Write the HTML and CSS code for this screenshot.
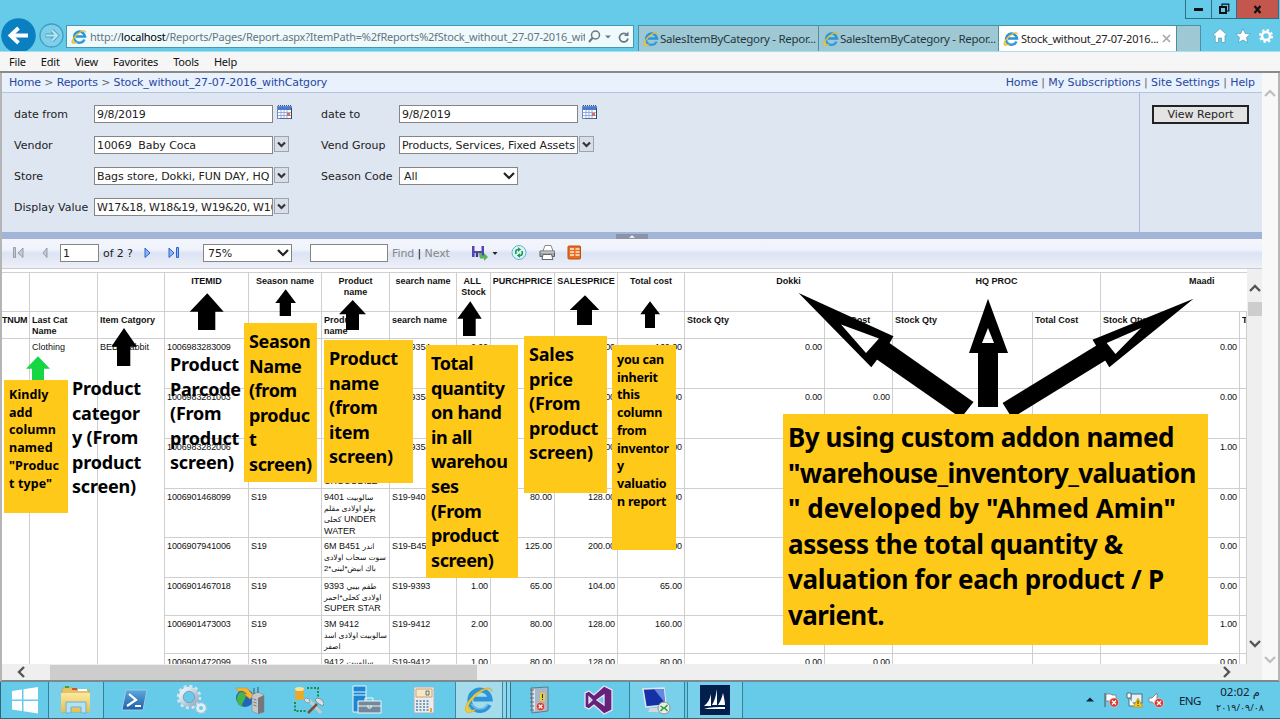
FILE: index.html
```html
<!DOCTYPE html>
<html lang="en">
<head>
<meta charset="utf-8">
<title>Stock_without_27-07-2016_withCatgory</title>
<link rel="stylesheet" href="styles.css">
</head>
<body>
<svg class="defs" width="0" height="0">
  <defs>
    <linearGradient id="gold" x1="0" y1="0" x2="0" y2="1"><stop offset="0" stop-color="#fbe9a0"/><stop offset="1" stop-color="#e5bf4f"/></linearGradient>
    <linearGradient id="steel" x1="0" y1="0" x2="1" y2="1"><stop offset="0" stop-color="#f4f9fc"/><stop offset="1" stop-color="#92abc3"/></linearGradient>
    <linearGradient id="ps" x1="0" y1="0" x2="0" y2="1"><stop offset="0" stop-color="#5fa8dd"/><stop offset="1" stop-color="#1d5fa5"/></linearGradient>
    <symbol id="ie" viewBox="0 0 32 32">
      <path d="M27 21a11 11 0 1 1 1-6H10" fill="none" stroke="#2d94d8" stroke-width="5"/>
      <path d="M26 20a10 10 0 0 1-18 0" fill="none" stroke="#72c4ef" stroke-width="1.5"/>
      <path d="M30 7c0-5-6-5-13-1C8 11-1 23 2 28c2 3 7 1 11-2-4 1-7 1-8-1C3 21 11 12 19 7c5-3 9-4 11 0z" fill="#f2cb31" stroke="#d6a51d" stroke-width=".6"/>
    </symbol>
    <symbol id="cal" viewBox="0 0 15 14">
      <rect x=".5" y="1.500" width="14" height="12" fill="#fff" stroke="#7088c0"/>
      <path d="M1 2h13v3H1z" fill="#4a7bd0"/><path d="M1 .5h13" stroke="#30508f" stroke-dasharray="1 1"/>
      <path d="M4 5v8M7 5v8M10 5v8M1 7.500h13M1 10.500h13" stroke="#7d9cd6" stroke-width=".8"/>
      <path d="M10 8h3v3h-3z" fill="#e06c48"/><path d="M14.500 3v11H3" fill="none" stroke="#34456e"/>
    </symbol>
    <symbol id="bad" viewBox="0 0 10 10"><circle cx="5" cy="5" r="4.600" fill="#d43a31" stroke="#f5c8c4" stroke-width=".7"/><path d="M3 3l4 4M7 3L3 7" stroke="#fff" stroke-width="1.400"/></symbol>
  </defs>
</svg>
<div class="screen">
  <header class="titlebar">
    <div class="nav">
      <svg width="66" height="51" viewBox="0 0 66 51"><circle cx="18.500" cy="35.500" r="17.300" fill="#0b80c0"/><path d="M28 35.500H11M18.500 28l-8 7.500 8 7.500" fill="none" stroke="#fff" stroke-width="3.800"/><circle cx="51.500" cy="35.500" r="11.500" fill="#7fcfea" stroke="#3d9cc0" stroke-width="1.300"/><path d="M45.500 35.500h11M52 30.500l5 5-5 5" fill="none" stroke="#4da3c2" stroke-width="4"/><path d="M46 35.500h10.500M52 30.500l5 5-5 5" fill="none" stroke="#b5e4f3" stroke-width="2.200"/></svg>
      <div class="address"><svg width="16" height="16"><use href="#ie"/></svg><span class="url">http://<b>localhost</b>/Reports/Pages/Report.aspx?ItemPath=%2fReports%2fStock_without_27-07-2016_wit</span>
        <svg width="44" height="16" viewBox="0 0 44 16"><circle cx="8.500" cy="6" r="4" fill="none" stroke="#677a82" stroke-width="1.500"/><path d="M5.500 9L2 13" stroke="#677a82" stroke-width="2"/><path d="M18 6.500h6l-3 3z" fill="#677a82"/><path d="M40.200 6A4.300 4.300 0 1 0 41 9.500" fill="none" stroke="#677a82" stroke-width="1.700"/><path d="M41.500 2.500V7H37z" fill="#677a82"/></svg>
      </div>
    </div>
    <div class="tabs">
      <div class="tab"><svg width="16" height="16"><use href="#ie"/></svg><span>SalesItemByCategory - Repor...</span></div>
      <div class="tab"><svg width="16" height="16"><use href="#ie"/></svg><span>SalesItemByCategory - Repor...</span></div>
      <div class="tab active"><svg width="16" height="16"><use href="#ie"/></svg><span>Stock_without_27-07-2016...</span><svg width="9" height="9" viewBox="0 0 9 9"><path d="M1 1l7 7M8 1L1 8" stroke="#aaa" stroke-width="1.700"/></svg></div>
      <div class="tab new"></div>
    </div>
    <div class="corner">
      <div class="winbtns"><span class="min"><i></i></span><span class="max"><svg width="12" height="12" viewBox="0 0 12 12"><path d="M4 3V1.200h6.800V8H9" fill="none" stroke="#111" stroke-width="1.200"/><rect x="2" y="4" width="6" height="6" fill="none" stroke="#111" stroke-width="2"/></svg></span><span class="close"><svg width="9" height="9" viewBox="0 0 9 9"><path d="M1.500 1l6 7M7.500 1l-6 7" stroke="#111" stroke-width="2.200"/></svg></span></div>
      <svg class="tools" width="64" height="18" viewBox="0 0 64 18"><g fill="#fff" stroke="#5b9eb8" stroke-width=".8"><path d="M8 1.500l7 6.500-1 1.200-1-.8V15.500H9.500v-4.500h-3v4.500H3.200V8.400l-1 .8L1 8z"/><path d="M31 1.500l2.200 5 5.300.5-4 3.500 1.200 5.300L31 13l-4.700 2.800 1.200-5.300-4-3.500 5.300-.5z"/></g><circle cx="54" cy="9" r="4" fill="none" stroke="#fff" stroke-width="2.600"/><circle cx="54" cy="9" r="5.800" fill="none" stroke="#fff" stroke-width="2.400" stroke-dasharray="2.300 2.250"/></svg>
    </div>
  </header>
  <nav class="menubar"><span>File</span><span>Edit</span><span>View</span><span>Favorites</span><span>Tools</span><span>Help</span></nav>
  <main class="window">
    <section class="report">
      <div class="crumbs"><div class="trail"><a>Home</a> &gt; <a>Reports</a> &gt; <a>Stock_without_27-07-2016_withCatgory</a></div><div class="links"><a>Home</a> | <a>My Subscriptions</a> | <a>Site Settings</a> | <a>Help</a></div></div>
      <div class="params">
        <div class="fields">
          <label>date from</label><div class="field"><span class="box">9/8/2019</span><svg class="cal" width="15" height="14"><use href="#cal"/></svg></div>
          <label>date to</label><div class="field"><span class="box">9/8/2019</span><svg class="cal" width="15" height="14"><use href="#cal"/></svg></div>
          <label>Vendor</label><div class="field"><span class="box">10069&nbsp; Baby Coca</span><span class="drop"><svg width="9" height="7" viewBox="0 0 9 7"><path d="M1 1.500l3.500 3.500L8 1.500" /></svg></span></div>
          <label>Vend Group</label><div class="field"><span class="box">Products, Services, Fixed Assets</span><span class="drop"><svg width="9" height="7" viewBox="0 0 9 7"><path d="M1 1.500l3.500 3.500L8 1.500" /></svg></span></div>
          <label>Store</label><div class="field"><span class="box">Bags store, Dokki, FUN DAY, HQ</span><span class="drop"><svg width="9" height="7" viewBox="0 0 9 7"><path d="M1 1.500l3.500 3.500L8 1.500" /></svg></span></div>
          <label>Season Code</label><div class="field"><span class="box select">All<svg width="12" height="8" viewBox="0 0 12 8"><path d="M1 1l5 5 5-5"/></svg></span></div>
          <label>Display Value</label><div class="field"><span class="box seasons">W17&amp;18, W18&amp;19, W19&amp;20, W16</span><span class="drop"><svg width="9" height="7" viewBox="0 0 9 7"><path d="M1 1.500l3.500 3.500L8 1.500" /></svg></span></div>
        </div>
        <div class="run"><div class="button">View Report</div></div>
      </div>
      <div class="splitter"><span><svg width="6" height="4"><path d="M0 4l3-3 3 3z" fill="#e3e9f5"/></svg></span></div>
      <div class="toolbar">
        <svg class="pg" width="36" height="12" viewBox="0 0 36 12"><g fill="#c7c9d0" stroke="#8b8e99" stroke-width=".8"><path d="M.5.500h2v10h-2zM10 1v9.500L5 6zM34 1v9.500L30 6z"/></g></svg>
        <span class="box page">1</span><span class="of">of 2 ?</span>
        <svg class="pg2" width="36" height="12" viewBox="0 0 36 12"><g fill="#8db4f4" stroke="#2c62cf" stroke-width="1"><path d="M1 1v9.500L6 6zM25 1v9.500L30 6zM32.500.500h2v10h-2z"/></g></svg>
        <span class="box zoomsel">75%<svg width="12" height="8" viewBox="0 0 12 8"><path d="M1 1l5 5 5-5"/></svg></span>
        <span class="box find"></span>
        <span class="findnext">Find <b>|</b> Next</span>
        <svg class="icons" width="112" height="18" viewBox="0 0 112 18">
          <path d="M1 2h12v11H1z" fill="#5146ad"/><path d="M3.500 2h7v5h-7z" fill="#f1f1fb"/><path d="M3.500 9h6v4h-6z" fill="#bfc3e5"/><path d="M5 9h2v4H5z" fill="#403585"/><path d="M8 9h3v2.500h2V9l4 4-4 4v-2.500H9z" fill="#56b558"/><path d="M21.500 8h5L24 11z" fill="#222"/>
          <circle cx="48" cy="8.500" r="7" fill="#d9f4f5" stroke="#5fb4d3" stroke-width="1"/><path d="M44.800 10V7.500c0-1.500 1-2 2.700-2M51.200 7v2.500c0 1.500-1 2-2.700 2" fill="none" stroke="#20974f" stroke-width="1.600"/><path d="M47 3.200l3.200 2.300L47 7.800zM49 9.200l-3.200 2.300 3.200 2.300z" fill="#20974f"/>
          <path d="M72 7L74 1.500h6L82 7" fill="#fff" stroke="#888" /><path d="M69 7h14.500v5.500H69z" fill="#a2a4a9" stroke="#5d6068"/><path d="M69.500 8h14" stroke="#ddd"/><path d="M72 10.500h8.500l1.500 5H71z" fill="#fff" stroke="#666"/>
          <rect x="97" y="2" width="12.500" height="13" rx="1" fill="#e56c24" stroke="#bb4e14"/><path d="M99 5h4M99 8h4M99 11h4M104.500 5h4M104.500 8h4M104.500 11h4" stroke="#fff1d0" stroke-width="1.700"/>
        </svg>
      </div>
      <div class="viewer">
        <div class="sheet">
          <div class="groups head">
            <i></i><i></i><i></i><i>ITEMID</i><i>Season name</i><i>Product<br>name</i><i>search name</i><i>ALL&nbsp;<br>Stock</i><i>PURCHPRICE</i><i>SALESPRICE</i><i>Total cost</i><i class="two">Dokki</i><i class="two">HQ PROC</i><i class="two last">Maadi</i>
          </div>
          <div class="groups sub">
            <i class="tnum">TNUM</i><i>Last Cat Name</i><i>Item Catgory</i><i></i><i></i><i>Product<br>name</i><i>search name</i><i></i><i></i><i></i><i></i><i>Stock Qty</i><i>Total Cost</i><i>Stock Qty</i><i>Total Cost</i><i>Stock Qty</i><i>T</i>
          </div>
          <div class="body">
            <div class="side"><i></i><i>Clothing</i><i>BEBE rabbit</i></div>
            <div class="rows">
              <div class="row r50"><i>1006983283009</i><i></i><i></i><i>S19-9354</i><i>2.00</i><i>80.00</i><i>128.00</i><i>160.00</i><i>0.00</i><i>0.00</i><i></i><i></i><i>0.00</i><i></i></div>
              <div class="row r50"><i>1006983281003</i><i></i><i></i><i>S19-9354</i><i>1.00</i><i>80.00</i><i>128.00</i><i>80.00</i><i>0.00</i><i>0.00</i><i></i><i></i><i>0.00</i><i></i></div>
              <div class="row r50"><i>1006983282006</i><i></i><i><br><br><br>CROCODILE</i><i>S19-9354</i><i>1.00</i><i>80.00</i><i>128.00</i><i>80.00</i><i>0.00</i><i>0.00</i><i></i><i></i><i>1.00</i><i></i></div>
              <div class="row r49"><i>1006901468099</i><i>S19</i><i>9401 <u>سالوبيت</u><br><u>بولو اولادى مقلم</u><br><u>كحلى</u> UNDER<br>WATER</i><i>S19-9401</i><i>1.00</i><i>80.00</i><i>128.00</i><i>80.00</i><i>0.00</i><i>0.00</i><i></i><i></i><i>0.00</i><i></i></div>
              <div class="row r40"><i>1006907941006</i><i>S19</i><i>6M B451 <u>اندر</u><br><u>سوت سحاب اولادى</u><br><u dir="rtl">باك ابيض*لبنى*2</u></i><i>S19-B451</i><i>1.00</i><i>125.00</i><i>200.00</i><i>125.00</i><i>0.00</i><i>0.00</i><i></i><i></i><i>0.00</i><i></i></div>
              <div class="row r38"><i>1006901467018</i><i>S19</i><i>9393 <u>طقم بيبي</u><br><u>اولادى كحلى*احمر</u><br>SUPER STAR</i><i>S19-9393</i><i>1.00</i><i>65.00</i><i>104.00</i><i>65.00</i><i>0.00</i><i>0.00</i><i></i><i></i><i>0.00</i><i></i></div>
              <div class="row r38"><i>1006901473003</i><i>S19</i><i>3M 9412<br><u>سالوبيت اولادى اسد</u><br><u>اصفر</u></i><i>S19-9412</i><i>2.00</i><i>80.00</i><i>128.00</i><i>160.00</i><i>0.00</i><i>0.00</i><i></i><i></i><i>1.00</i><i></i></div>
              <div class="row r38"><i>1006901472099</i><i>S19</i><i>9412 <u>سالوبيت</u></i><i>S19-9412</i><i>1.00</i><i>80.00</i><i>128.00</i><i>80.00</i><i>0.00</i><i>0.00</i><i></i><i></i><i>0.00</i><i></i></div>
            </div>
          </div>
        </div>
        <div class="vbar"><svg width="12" height="9" viewBox="0 0 12 9"><path d="M1 7l5-5 5 5"/></svg><b></b><svg class="down" width="12" height="9" viewBox="0 0 12 9"><path d="M1 2l5 5 5-5"/></svg></div>
      </div>
      <div class="hbar"><svg width="9" height="12" viewBox="0 0 9 12"><path d="M7 1L2 6l5 5"/></svg><b></b><svg class="right" width="9" height="12" viewBox="0 0 9 12"><path d="M2 1l5 5-5 5"/></svg></div>
    </section>
    <aside class="outerbar"><svg width="12" height="9" viewBox="0 0 12 9"><path d="M1 7l5-5 5 5"/></svg><svg width="12" height="9" viewBox="0 0 12 9"><path d="M1 2l5 5 5-5"/></svg></aside>
  </main>
  <footer class="taskbar">
    <span class="task start"><svg width="28" height="28" viewBox="0 0 28 28"><path d="M1 5l10-1.500v10H1zM12.500 3.300L27 1v12.500H12.500zM1 15h10v10L1 23.500zM12.500 15H27v12.500L12.500 25.300z" fill="#fff"/></svg></span>
    <span class="task open w56"><svg width="32" height="30" viewBox="0 0 32 30"><path d="M2 5l2-3h7l2 3h16v22H2z" fill="#e6c267" stroke="#c39a3d" stroke-width=".6"/><path d="M5 2h4" stroke="#39a24a" stroke-width="2"/><path d="M12 4h5" stroke="#d84b35" stroke-width="2"/><path d="M18 5h9" stroke="#fff" stroke-width="2"/><path d="M1 8h29v19H1z" fill="url(#gold)"/><path d="M6 28V17h20v11h-5v-6H11v6z" fill="#b6e1f3" stroke="#6ab0d2"/></svg></span>
    <span class="task w60"><svg width="28" height="24" viewBox="0 0 28 24"><path d="M6 2h21l-4 20H2z" fill="url(#ps)" stroke="#9cc9e9"/><path d="M9 6l7 6-9 6M15 18h6" fill="none" stroke="#fff" stroke-width="2.200"/></svg></span>
    <span class="task w56"><svg width="32" height="30" viewBox="0 0 32 30"><circle cx="13" cy="12" r="8" fill="none" stroke="url(#steel)" stroke-width="4.500"/><circle cx="13" cy="12" r="11" fill="none" stroke="#d7e6f1" stroke-width="2.500" stroke-dasharray="3 2.760"/><circle cx="25" cy="23" r="3.500" fill="none" stroke="#e2edf5" stroke-width="3"/><circle cx="25" cy="23" r="5.400" fill="none" stroke="#b1c6d8" stroke-width="1.800" stroke-dasharray="2 2.240"/><circle cx="13" cy="12" r="5.700" fill="none" stroke="#768fa8" stroke-width=".7"/></svg></span>
    <span class="task w60"><svg width="32" height="30" viewBox="0 0 32 30"><circle cx="11" cy="13" r="9" fill="#2165b8"/><path d="M5 8c5-3 8 2 6 6s-4 5-2 8c-6-1-8-8-4-14z" fill="#47b54b"/><path d="M2 3h11l5 6h3l-5 5-6-5h3L9 6H4z" fill="#f6b72e" stroke="#cf8a16" stroke-width=".5"/><path d="M18 10l6-3 6 3v17l-6 2-6-3z" fill="#c5c8cb" stroke="#85898d" stroke-width=".6"/><path d="M24 13v16l6-2V10z" fill="#74787d"/><path d="M19.500 14l3 1M19.500 17l3 1M19.500 20l3 1" stroke="#777"/><path d="M20 3v6M24 2v6" stroke="#456"/></svg></span>
    <span class="task w56"><svg width="32" height="30" viewBox="0 0 32 30"><path d="M3 4v9c0 3 9 3 9 0V4z" fill="#e8aa2d"/><ellipse cx="7.500" cy="4" rx="4.500" ry="2" fill="#fbe29a"/><path d="M15 3h11v10M3 17v9h11" fill="none" stroke="#1d8c44" stroke-width="2" stroke-dasharray="2 1.500"/><path d="M17 15l12 13" stroke="#c5ccd1" stroke-width="3"/><path d="M16 28l9-9" stroke="#7b5036" stroke-width="2.500"/><path d="M23 15l4 4 4 2 1-3-3-4-4-1z" fill="#dbe0e3" stroke="#76818a" stroke-width=".8"/><path d="M14 13l3 1 1 3-3 1-3-3z" fill="#dbe0e3" stroke="#76818a" stroke-width=".6"/></svg></span>
    <span class="task w60"><svg width="32" height="30" viewBox="0 0 32 30"><path d="M3 1h13v26H3z" fill="#1d86d2" stroke="#e7f6fc"/><path d="M3 7h13M3 10h13" stroke="#e7f6fc"/><path d="M8 16h23v12H8z" fill="#73889a" stroke="#edf6fa"/><path d="M15 16v-3h8v3M8 21h23M18 20v3h3v-3" fill="none" stroke="#edf6fa"/></svg></span>
    <span class="task w56"><svg width="24" height="28" viewBox="0 0 24 28"><rect x="2" y="1" width="20" height="26" rx="1" fill="#e9edef" stroke="#a6b4bc"/><path d="M4 3h16v8H4z" fill="#f8e7c9" stroke="#d4a264"/><path d="M14 5h3v4h-3z" fill="none" stroke="#577"/><path d="M4 15h13M4 18h13M4 21h13M4 24h13" stroke="#7e9cb2" stroke-width="2" stroke-dasharray="2 1.500"/><path d="M18 22h2v4h-2z" fill="#e9a33c"/></svg></span>
    <span class="task ie"><svg width="30" height="30"><use href="#ie"/></svg></span><span class="stack"></span><span class="stack"></span>
    <span class="task w58"><svg width="24" height="30" viewBox="0 0 24 30"><path d="M3 3l17-1v24l-16 2z" fill="#a7b8c8" stroke="#66798c"/><path d="M6 4v22" stroke="#edf3f6" stroke-width="1.500"/><path d="M2 5h4M2 9h4M2 13h4M2 17h4M2 21h4M2 25h4" stroke="#5d6f80"/><path d="M12 8h5v8h-5z" fill="#e9cf34"/><path d="M14.500 9v4M14.500 14v1" stroke="#333"/><use href="#bad" x="8" y="17" width="9" height="9"/></svg></span>
    <span class="task w60"><svg width="30" height="30" viewBox="0 0 30 30"><path d="M20 1l8 4v20l-8 4-10-9-5 4-4-2V8l4-2 5 4zM20 10l-7 5 7 5zM5 12v6l3-3z" fill="#68217a" fill-rule="evenodd" stroke="#e9e5f2" stroke-width="1.300"/></svg></span>
    <span class="task open w56"><svg width="30" height="30" viewBox="0 0 30 30"><path d="M1 4l21-1 2 17-20 2z" fill="#1630a5" stroke="#dfe7ee" stroke-width="1.500"/><path d="M12 4l10 0 1 14z" fill="#6486e5"/><path d="M8 23h10l2 4H6z" fill="#d3d8dc"/><circle cx="22" cy="23" r="6" fill="#e6ebe5" stroke="#8b9690"/><path d="M18.500 21l3 2-3 3M25.500 20l-3 3 3 3" fill="none" stroke="#2e9a43" stroke-width="1.500"/></svg></span>
    <span class="task open w56 crm"><svg width="30" height="30" viewBox="0 0 30 30"><path d="M0 0h30v30H0z" fill="#031f4c"/><path d="M4 21c4-3 6-7 7-12v12zM12 20c3-5 4-10 5-16v16zM18 20c2-3 4-7 5-12 1 4 2 9 2 12z" fill="#fff"/><path d="M4 24c6-2 14-2 21-2v2z" fill="#fff"/></svg></span>
    <div class="tray">
      <svg width="82" height="18" viewBox="0 0 82 18"><path d="M1 10.500h8L5 6.500z" fill="#123"/><path d="M20 2v14" stroke="#555"/><path d="M21 3h5l1 1h4v7h-4l-1-1h-5z" fill="#fff" stroke="#777" stroke-width=".8"/><use href="#bad" x="24" y="6.500" width="10" height="10"/><rect x="46" y="3" width="11" height="9" fill="#e8f2f7" stroke="#4d6f80"/><path d="M42 2h4v5h-4zM44 7v8h6" fill="#fff" stroke="#4d6f80"/><path d="M53 7l5 9H48z" fill="#f5c518" stroke="#bc8d00" stroke-width=".6"/><path d="M53 9.500v3.500M53 14v1" stroke="#333"/><path d="M64 7h3l5-5v13l-5-4h-3z" fill="#fff" stroke="#777" stroke-width=".8"/><use href="#bad" x="69" y="7" width="10" height="10"/></svg>
      <span class="lang">ENG</span><div class="clock"><div>02:02 م</div><div class="date">٢٠١٩/٠٩/٠٨</div></div>
    </div>
  </footer>
  <div class="markup">
    <svg class="arrows" width="1280" height="719" viewBox="0 0 1280 719">
      <path d="M124 328l13 18.700h-6.700V366H117v-19.300h-5.700zM207.300 293.300l16.400 18.400h-8.400V330H198v-18.300h-8.300zM285.700 289.300L296 303h-5v13h-11.300v-13h-4.400zM352.700 300l13.300 14.300h-7V330h-13v-15.700h-7zM470.300 301.300l11.400 17.400h-6V336H463v-17.300h-5.700zM585 295.300l14.300 14.700H592v15h-15v-15h-7.300zM650 301.300l10 13h-5V328h-10v-13.700h-4.700z"/>
      <path class="green" d="M38 356.300l12 12.400h-6V381H32v-12.300h-6z"/>
      <g fill-rule="evenodd">
        <path d="M798.600 293L893.500 336.300 889 344 871.300 367.300zM841 324.500L866 353 879 338.500z"/><path d="M888 342L973.500 402 961 418 874 357.500z"/>
        <path d="M988 298.700L1008 353H969zM988 328l-6 15h12z"/><path d="M978 343h20v64h-20z"/>
        <path d="M1193.500 298.700L1092.500 339.700 1109.300 367.300zM1141 328L1106.700 343 1115.500 354z"/><path d="M1098 344.500L1002.600 403 1012 418 1111 357z"/>
      </g>
    </svg>
    <div class="note small kind">Kindly
add
column
named
"Produc
t type"</div>
    <div class="note plain category">Product
categor
y (From
product
screen)</div>
    <div class="note plain parcode">Product
Parcode
(From
product
screen)</div>
    <div class="note season">Season
Name
(from
produc
t
screen)</div>
    <div class="note product">Product
name
(from
item
screen)</div>
    <div class="note quantity">Total
quantity
on hand
in all
warehou
ses
(From
product
screen)</div>
    <div class="note sales">Sales
price
(From
product
screen)</div>
    <div class="note small cost">you can
inherit
this
column
from
inventor
y
valuatio
n report</div>
    <div class="note big"><p>By using custom addon named</p><p class="tight">"warehouse_inventory_valuation</p><p class="loose">" developed by "Ahmed Amin"</p><p>assess the total quantity &amp;</p><p class="normal">valuation for each product / P</p><p class="tight">varient.</p></div>
  </div>
</div>
</body>
</html>
```
FILE: styles.css
```css
* { box-sizing: border-box; }
body { margin: 0; }
i { font-style: normal; }
u { text-decoration: none; }
svg { display: block; flex: none; }
.defs { position: absolute; }
.screen { position: relative; display: flex; flex-direction: column; width: 1280px; height: 719px; overflow: hidden; background: #fff; font: 11px "DejaVu Sans", sans-serif; color: #222; }

.titlebar { display: flex; height: 52px; background: #66cbe9; border-bottom: 1px solid #a5dff0; font: 11.5px "Noto Sans", sans-serif; flex: none; }
.nav { display: flex; width: 638px; flex: none; }
.address { display: flex; align-items: center; width: 568px; height: 23px; margin-top: 25px; padding: 0 2px 0 4px; background: #effafd; border: 1px solid #4797af; color: #66757b; }
.url { width: 495px; margin-left: 3px; overflow: hidden; white-space: nowrap; font-size: 11px; letter-spacing: -.22px; }
.address > svg:last-child { margin-left: auto; }
.url b { font-weight: 400; color: #000; }
.tabs { display: flex; margin: 25px -16px 0 0; height: 26px; flex: none; }
.tab { display: flex; align-items: center; width: 180px; padding: 0 2px 0 4px; background: #9fc8d5; border: 1px solid #4b91a6; border-width: 1px 0 0 1px; white-space: nowrap; color: #23383f; }
.tab span { margin-left: 1px; letter-spacing: -.3px; }
.tab.active { width: 178px; background: #fff; color: #222; }
.tab.active span { margin-left: 2px; font-size: 11px; letter-spacing: -.22px; }
.tab.active svg:last-child { margin-left: auto; margin-right: 3px; }
.tab.new { width: 25px; border-right-width: 1px; }
.corner { display: flex; flex-direction: column; width: 96px; margin-left: auto; flex: none; }
.winbtns { display: flex; height: 19px; margin-right: 2px; border: 1px solid #2f6f84; border-top: 0; }
.winbtns span { display: flex; align-items: center; justify-content: center; border-right: 1px solid #2f6f84; }
.winbtns .min { width: 26px; }
.min i { width: 9px; height: 3px; background: #111; }
.winbtns .max { width: 25px; }
.winbtns .close { flex: 1; border: 0; background: #c4574d; }
.tools { margin: 8px 0 0 27px; }

.menubar { display: flex; gap: 15px; height: 21px; padding-left: 9px; align-items: center; background: #f6f6f6; border-bottom: 2px solid #8a8a8a; font: 11px "Noto Sans", sans-serif; letter-spacing: -.2px; color: #111; flex: none; }

.window { display: flex; height: 609px; border-left: 2px solid #b5b5b5; border-right: 2px solid #b5b5b5; border-bottom: 2px solid #7c8a90; flex: none; }
.report { display: flex; flex-direction: column; width: 1260px; }
.crumbs { display: flex; justify-content: space-between; align-items: center; height: 20px; padding: 0 7px; background: #e9f1fd; border-bottom: 1px solid #b6c3dc; color: #666; letter-spacing: -.15px; flex: none; }
.crumbs a { color: #2747a0; }
.links { letter-spacing: -.08px; }
.params { display: flex; height: 139px; background: #dee6f2; flex: none; }
.fields { display: grid; grid-template-columns: 80px 227px 78px 220px; grid-auto-rows: 31px; align-content: start; align-items: center; width: 1138px; padding: 5px 0 0 12px; border-right: 1px solid #a9bbdc; white-space: nowrap; }
.field { display: flex; align-items: center; }
.box { display: flex; align-items: center; width: 179px; height: 18px; padding-left: 2px; border: 1px solid #858585; background: #fff; overflow: hidden; white-space: nowrap; letter-spacing: -.09px; }
.fields label { padding-top: 1px; }
.fields .box { padding-top: 1px; }
.fields .seasons { letter-spacing: -.3px; }
.select { width: 119px; padding: 0 2px 0 4px; justify-content: space-between; }
.box path { fill: none; stroke: #222; stroke-width: 2.2; }
.cal { margin: -4px 0 0 4px; }
.drop { display: flex; align-items: center; justify-content: center; width: 15px; height: 16px; margin: -1px 0 0 1px; background: #d9dfe9; border: 1px solid #9ca3b4; }
.drop path { fill: none; stroke: #333; stroke-width: 2.2; }
.run { padding: 12px 0 0 12px; }
.button { width: 97px; height: 19px; border: 2px solid #222; background: #e3e3e3; text-align: center; line-height: 15px; }
.splitter { display: flex; justify-content: center; align-items: flex-end; height: 7px; background: #a3b5d7; flex: none; }
.splitter span { display: flex; justify-content: center; width: 32px; height: 5px; background: #8b94a6; }
.toolbar { display: flex; align-items: center; height: 30px; padding: 0 0 2px 11px; background: linear-gradient(#f2f5fb 0, #f0f3fb 35%, #dce3f3 50%, #e8ecf7 85%, #eef1f8); border-bottom: 1px solid #c9cad6; flex: none; white-space: nowrap; }
.toolbar .box, .of, .findnext { padding-top: 1px; }
.pg2 { margin-left: 10px; }
.page { width: 39px; margin-left: 11px; }
.of { width: 31px; margin-left: 4px; letter-spacing: -.1px; }
.zoomsel { width: 89px; margin-left: 23px; padding: 0 2px 0 4px; justify-content: space-between; }
.find { width: 78px; margin-left: 18px; }
.findnext { margin-left: 4px; color: #888; letter-spacing: -.1px; }
.findnext b { color: #111; font-weight: 400; }
.icons { margin-left: 21px; }

.viewer { display: flex; height: 395px; flex: none; }
.sheet { width: 1245px; margin-top: 3px; border-top: 1px solid #d0d0d0; overflow: hidden; font: 9px/11.2px "Liberation Sans", "DejaVu Sans", sans-serif; color: #111; }
.sheet i { padding: 3px 3px 0 2px; border-right: 1px solid #cfcfcf; overflow: hidden; }
.sheet u { font-size: 7.6px; line-height: 1; }
.groups { display: grid; grid-template-columns: 28px 68px 67px 84px 73px 68px 67px 34px 64px 63px 67px 140px 68px 140px 68px 139px 7px; border-bottom: 1px solid #cfcfcf; font-weight: 700; }
.head { height: 39px; text-align: center; }
.head i { white-space: nowrap; padding-left: 0; padding-right: 0; }
.head .two { grid-column: span 2; }
.head .last { text-align: left; padding-left: 88px; border: 0; }
.sub { height: 27px; }
.sub .tnum { padding-left: 0; padding-right: 0; letter-spacing: -.15px; }
.body { display: flex; height: 330px; }
.side { display: flex; width: 163px; flex: none; }
.side i:nth-child(1) { width: 28px; }
.side i:nth-child(2) { width: 68px; }
.side i:nth-child(3) { width: 67px; }
.rows { display: flex; flex-direction: column; }
.row { display: grid; grid-template-columns: 84px 73px 68px 67px 34px 64px 63px 67px 140px 68px 140px 68px 139px 7px; border-bottom: 1px solid #cfcfcf; letter-spacing: -.1px; white-space: nowrap; flex: none; }
.row i:nth-child(3) { letter-spacing: 0; padding-right: 0; }
.row i:nth-child(n+5) { text-align: right; padding-right: 2px; }
.r50 { height: 50px; }
.r49 { height: 49px; }
.r40 { height: 40px; }
.r38 { height: 38px; }
.vbar { display: flex; flex-direction: column; align-items: center; width: 15px; padding: 15px 0 16px; background: #efefef; }
.vbar b { width: 14px; height: 14px; margin-top: 9px; background: #cdcdcd; }
.vbar .down { margin-top: auto; }
.vbar path, .hbar path { fill: none; stroke: #555; stroke-width: 2.4; }
.hbar { display: flex; align-items: center; height: 16px; padding: 0 31px 0 15px; background: #efefef; }
.hbar b { width: 427px; height: 15px; margin-left: 24px; background: #cdcdcd; }
.hbar .right { margin-left: auto; }
.outerbar { display: flex; flex-direction: column; justify-content: space-between; align-items: center; width: 16px; padding: 16px 0; background: #f8f8f8; }
.outerbar path { fill: none; stroke: #bdbdbd; stroke-width: 2.2; }

.taskbar { display: flex; height: 37px; background: #66cbe9; border-bottom: 1px solid #326679; flex: none; }
.task { display: flex; align-items: center; justify-content: center; flex: none; }
.start { width: 48px; border-left: 1px solid #326679; }
.open { background: #78d0ea; border: 1px solid #34819b; border-width: 0 1px; }
.w56 { width: 56px; }
.w58 { width: 58px; }
.w60 { width: 60px; }
.crm { margin-left: 2px; }
.task.ie { width: 48px; margin-left: 3px; background: #a4dcec; border: 1px solid #3a8aa5; border-width: 0 1px; }
.stack { width: 4px; background: #8dd6ec; border-right: 1px solid #2f7891; }
.tray { display: flex; align-items: center; margin-left: auto; padding-right: 14px; font: 11.5px "Noto Sans", "DejaVu Sans", sans-serif; color: #123; }
.lang { width: 23px; margin-left: 12px; letter-spacing: -.6px; }
.clock { width: 52px; margin-left: 12px; text-align: center; line-height: 16px; letter-spacing: -.4px; white-space: nowrap; }
.date { font-size: 9.5px; }

/* Annotations pinned over the desktop */
.markup { position: absolute; inset: 0; color: #000; }
.arrows { position: absolute; left: 0; top: 0; }
.green { fill: #17d643; }
.note { position: absolute; background: #ffc919; white-space: pre; font: 700 18px/24.6px "Noto Sans", sans-serif; letter-spacing: -.2px; padding: 6px 0 0 5px; }
.plain { background: none; padding: 0; }
.small { font-size: 12.5px; line-height: 17.7px; }
.kind { left: 4px; top: 380px; width: 64px; height: 133px; letter-spacing: .1px; }
.category { left: 72px; top: 376px; }
.parcode { left: 170px; top: 352px; }
.season { left: 244px; top: 323px; width: 73px; height: 159px; letter-spacing: -.35px; }
.product { left: 324px; top: 340px; width: 89px; height: 143px; }
.quantity { left: 426px; top: 345px; width: 92px; height: 233px; letter-spacing: -.4px; }
.sales { left: 524px; top: 336px; width: 83px; height: 157px; }
.cost { left: 612px; top: 345px; width: 64px; height: 205px; }
.big { left: 783px; top: 414px; width: 425px; height: 231px; font-size: 26px; line-height: 35.6px; }
.big p { margin: 0; letter-spacing: -.44px; }
.big .tight { letter-spacing: -.6px; }
.big .loose { letter-spacing: .02px; }
.big .normal { letter-spacing: -.3px; }
```
